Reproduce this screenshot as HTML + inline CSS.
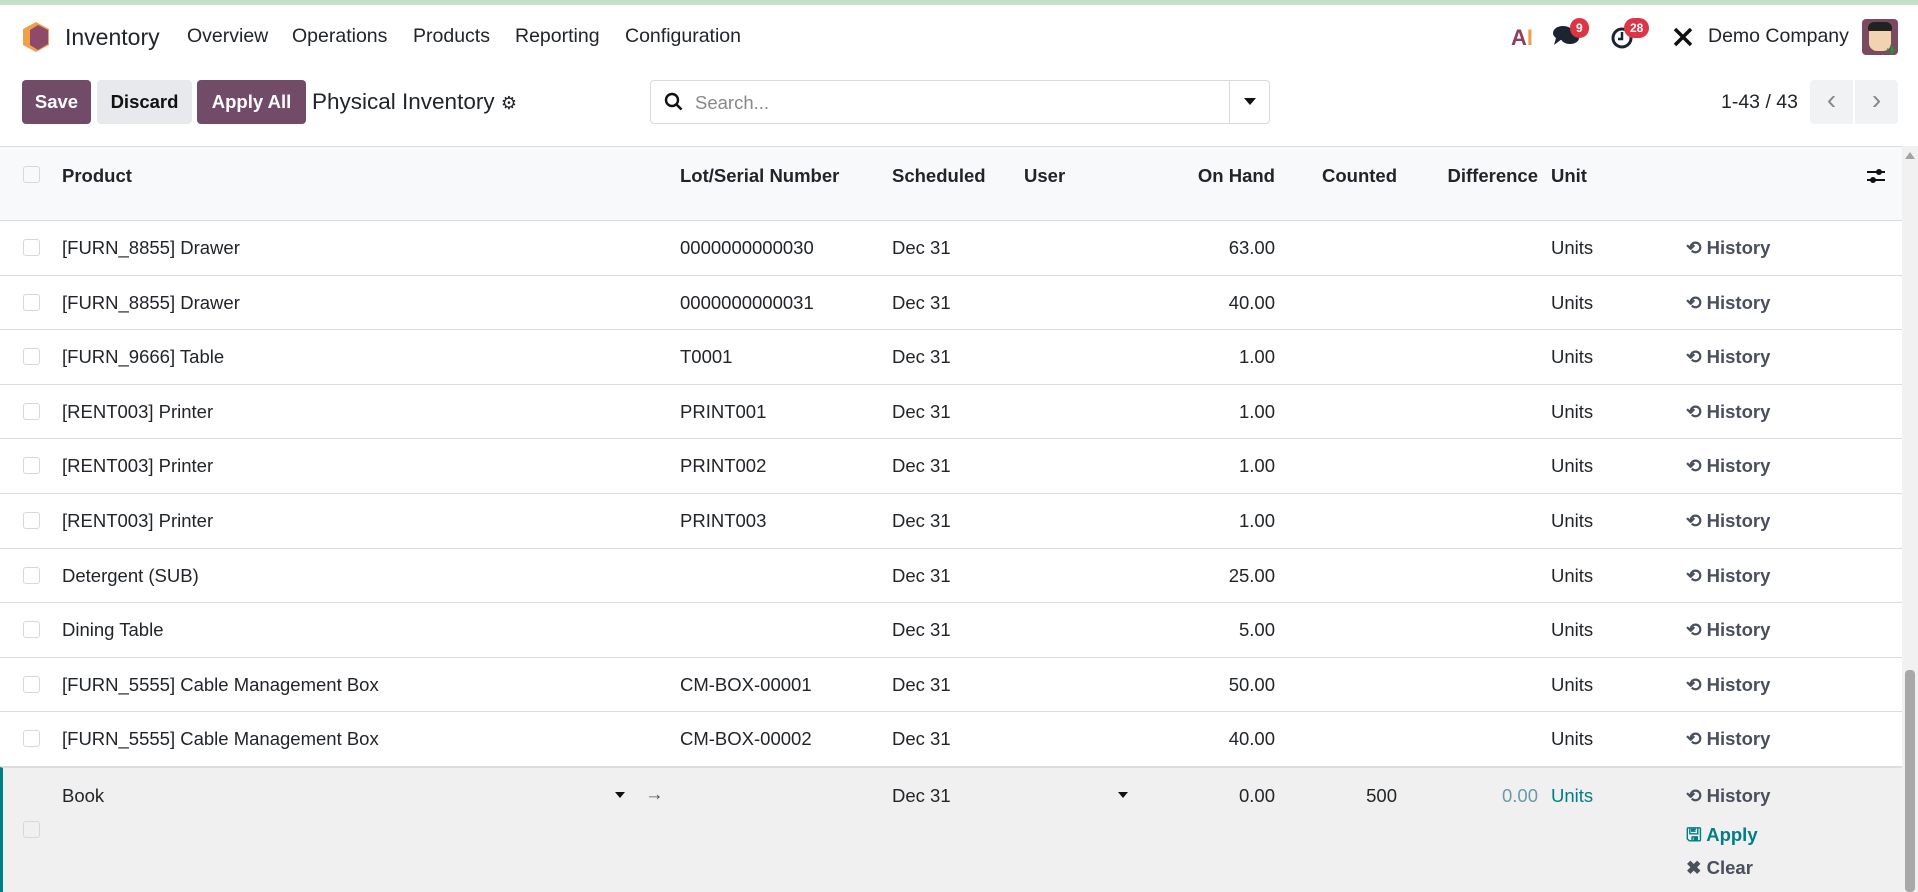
<!DOCTYPE html>
<html><head><meta charset="utf-8"><style>
*{box-sizing:border-box;margin:0;padding:0}
body{width:1918px;height:892px;overflow:hidden;background:#fff;font-family:"Liberation Sans",sans-serif;color:#212529;font-size:18.5px;position:relative}
.a{position:absolute;white-space:nowrap}
.nav{font-size:19.5px;top:25px}
.btn{position:absolute;top:80px;height:44px;border-radius:4px;font-weight:bold;font-size:18.5px;display:flex;align-items:center;justify-content:center}
.row{position:absolute;left:0;width:1902px;border-bottom:1px solid #dcdcdc;background:#fff}
.row .a{top:50%;transform:translateY(-50%)}
.cb{position:absolute;left:23px;width:17px;height:17px;border:1px solid #d5d8dc;border-radius:3px;background:#fff}
.r{text-align:right}
.hist{color:#4a4f5e;font-weight:bold}
.badge{position:absolute;background:#dc3545;color:#fff;font-size:12px;font-weight:bold;border-radius:10px;height:20px;line-height:20px;text-align:center;padding:0 6px}
</style></head><body>
<div class="a" style="left:0;top:0;width:1918px;height:5px;background:#c3e0c7"></div>
<svg class="a" style="left:22px;top:21px" width="28" height="32" viewBox="0 0 28 32"><polygon points="14,1 27,8 27,24 14,31 1,24 1,8" fill="#f0a04b"/><polygon points="16,4 26,9 26,23 16,29 8,24 8,9" fill="#8f4a6a"/></svg>
<div class="a" style="left:65px;top:24px;font-size:23px">Inventory</div>
<div class="a nav" style="left:187px">Overview</div>
<div class="a nav" style="left:292px">Operations</div>
<div class="a nav" style="left:413px">Products</div>
<div class="a nav" style="left:515px">Reporting</div>
<div class="a nav" style="left:625px">Configuration</div>
<div class="a" style="left:1511px;top:25px;font-size:22px;font-weight:bold;color:#8f3f5a">A<span style="color:#f0a04b">I</span></div>
<svg class="a" style="left:1552px;top:24px" width="28" height="24" viewBox="0 0 28 24"><ellipse cx="11" cy="9" rx="10" ry="7" fill="#1b2430"/><ellipse cx="18" cy="14" rx="9" ry="6" fill="#1b2430"/><polygon points="4,14 2,21 10,15" fill="#1b2430"/></svg>
<div class="badge" style="left:1570px;top:18px">9</div>
<svg class="a" style="left:1610px;top:26px" width="24" height="24" viewBox="0 0 24 24"><circle cx="12" cy="12" r="9" fill="none" stroke="#1b2430" stroke-width="3"/><path d="M12 6v7h-4" stroke="#1b2430" stroke-width="2.5" fill="none"/></svg>
<div class="badge" style="left:1624px;top:18px">28</div>
<svg class="a" style="left:1672px;top:26px" width="22" height="22" viewBox="0 0 22 22"><path d="M3 3l16 16M19 3L3 19" stroke="#111" stroke-width="3.5"/></svg>
<div class="a" style="left:1708px;top:25px;font-size:19.5px">Demo Company</div>
<div class="a" style="left:1862px;top:19px;width:36px;height:36px;border-radius:4px;background:#7a4a5e"><div style="position:absolute;left:7px;top:6px;width:22px;height:26px;background:#f2d3b1;border-radius:8px"></div><div style="position:absolute;left:6px;top:3px;width:24px;height:9px;background:#222;border-radius:6px 6px 2px 2px"></div><div style="position:absolute;right:-2px;bottom:-2px;width:14px;height:14px;color:#1a9b3a;font-size:14px;line-height:14px">✈</div></div>

<div class="btn" style="left:22px;width:69px;background:#714b67;color:#fff">Save</div>
<div class="btn" style="left:97px;width:95px;background:#e7e9ed;color:#111">Discard</div>
<div class="btn" style="left:197px;width:109px;background:#714b67;color:#fff">Apply All</div>
<div class="a" style="left:312px;top:89px;font-size:22.5px">Physical Inventory <span style="font-size:18px">⚙</span></div>
<div class="a" style="left:650px;top:80px;width:620px;height:44px;border:1px solid #d8dadd;border-radius:4px"></div>
<svg class="a" style="left:664px;top:92px" width="20" height="20" viewBox="0 0 20 20"><circle cx="8" cy="8" r="6" fill="none" stroke="#111" stroke-width="2.4"/><path d="M12.5 12.5l5 5" stroke="#111" stroke-width="2.6"/></svg>
<div class="a" style="left:695px;top:92px;color:#888;font-size:18.5px">Search...</div>
<div class="a" style="left:1229px;top:80px;width:1px;height:44px;background:#d8dadd"></div>
<div class="a" style="left:1244px;top:98px;width:0;height:0;border-left:6px solid transparent;border-right:6px solid transparent;border-top:7px solid #111"></div>
<div class="a" style="left:1721px;top:91px;font-size:19.5px">1-43 / 43</div>
<div class="a" style="left:1810px;top:80px;width:43px;height:44px;background:#f1f2f4;border-radius:4px 0 0 4px;color:#888;font-size:28px;text-align:center;line-height:40px">‹</div>
<div class="a" style="left:1855px;top:80px;width:43px;height:44px;background:#f1f2f4;border-radius:0 4px 4px 0;color:#888;font-size:28px;text-align:center;line-height:40px">›</div>

<div class="a" style="left:0;top:146px;width:1902px;height:75px;background:#f8f9fa;border-top:1px solid #dcdcdc;border-bottom:1px solid #dcdcdc;font-weight:bold">
<div class="cb" style="top:19px;background:#f8f9fa"></div>
<div class="a" style="left:62px;top:18px">Product</div>
<div class="a" style="left:680px;top:18px">Lot/Serial Number</div>
<div class="a" style="left:892px;top:18px">Scheduled</div>
<div class="a" style="left:1024px;top:18px">User</div>
<div class="a" style="left:1175px;width:100px;top:18px;text-align:right">On Hand</div>
<div class="a" style="left:1297px;width:100px;top:18px;text-align:right">Counted</div>
<div class="a" style="left:1418px;width:120px;top:18px;text-align:right">Difference</div>
<div class="a" style="left:1551px;top:18px">Unit</div>
<svg class="a" style="left:1866px;top:20px" width="20" height="18" viewBox="0 0 20 18"><path d="M1 5h18M1 13h18" stroke="#111" stroke-width="2"/><circle cx="13" cy="5" r="3" fill="#111"/><circle cx="7" cy="13" r="3" fill="#111"/></svg>
</div>

<div id="rows"></div>
<script>
var d=[["[FURN_8855] Drawer","0000000000030","63.00"],["[FURN_8855] Drawer","0000000000031","40.00"],["[FURN_9666] Table","T0001","1.00"],["[RENT003] Printer","PRINT001","1.00"],["[RENT003] Printer","PRINT002","1.00"],["[RENT003] Printer","PRINT003","1.00"],["Detergent (SUB)","","25.00"],["Dining Table","","5.00"],["[FURN_5555] Cable Management Box","CM-BOX-00001","50.00"],["[FURN_5555] Cable Management Box","CM-BOX-00002","40.00"]];
var h="";
d.forEach(function(r,i){var t=Math.round(221+i*54.6),b=Math.round(221+(i+1)*54.6);
h+='<div class="row" style="top:'+t+'px;height:'+(b-t)+'px"><div class="cb" style="top:18px"></div><div class="a" style="left:62px">'+r[0]+'</div><div class="a" style="left:680px">'+r[1]+'</div><div class="a" style="left:892px">Dec 31</div><div class="a r" style="left:1175px;width:100px">'+r[2]+'</div><div class="a" style="left:1551px">Units</div><div class="a hist" style="left:1686px">⟲ History</div></div>';});
document.getElementById('rows').innerHTML=h;
</script>

<div class="a" style="left:0;top:767px;width:1902px;height:125px;background:#f0f0f0;border-left:3px solid #017e84;border-top:1px solid #dcdcdc">
<div class="cb" style="left:20px;top:53px;background:#f0f0f0"></div>
<div class="a" style="left:59px;top:17px">Book</div>
<div class="a" style="left:612px;top:24px;border-left:5px solid transparent;border-right:5px solid transparent;border-top:6px solid #111"></div>
<div class="a" style="left:642px;top:15px;color:#555;font-weight:bold">→</div>
<div class="a" style="left:889px;top:17px">Dec 31</div>
<div class="a" style="left:1115px;top:24px;border-left:5px solid transparent;border-right:5px solid transparent;border-top:6px solid #111"></div>
<div class="a r" style="left:1172px;width:100px;top:17px">0.00</div>
<div class="a r" style="left:1294px;width:100px;top:17px">500</div>
<div class="a r" style="left:1435px;width:100px;top:17px;color:#6c9aa6">0.00</div>
<div class="a" style="left:1548px;top:17px;color:#017e84">Units</div>
<div class="a hist" style="left:1683px;top:17px">⟲ History</div>
<div class="a" style="left:1683px;top:53px;color:#017e84;font-weight:bold">🖫 Apply</div>
<div class="a hist" style="left:1683px;top:89px">✖ Clear</div>
</div>

<div class="a" style="left:1902px;top:146px;width:16px;height:746px;background:#f1f1f1"></div>
<div class="a" style="left:1905px;top:152px;border-left:5px solid transparent;border-right:5px solid transparent;border-bottom:7px solid #a3a3a3"></div>
<div class="a" style="left:1905px;top:670px;width:10px;height:222px;background:#a8a8a8;border-radius:4px"></div>
</body></html>
